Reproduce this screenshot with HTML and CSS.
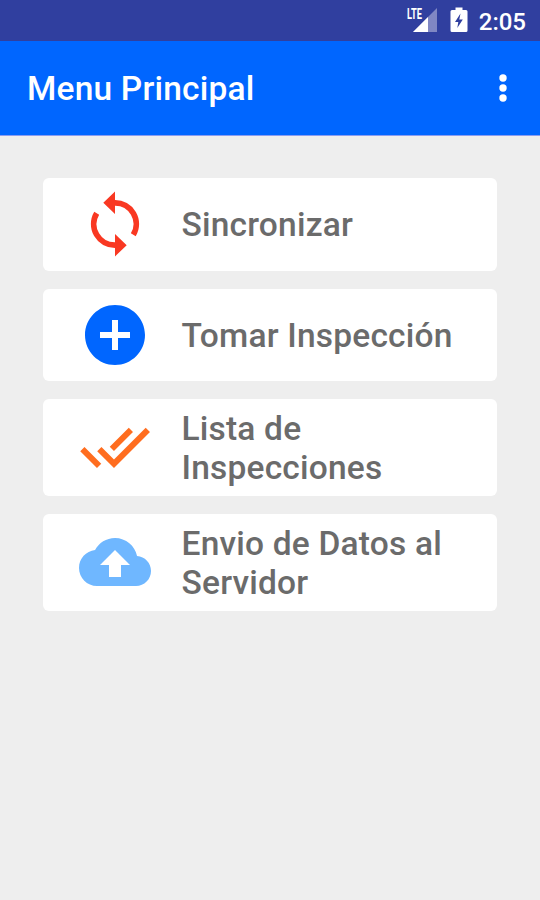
FILE: index.html
```
<!DOCTYPE html>
<html lang="es">
<head>
    <meta charset="utf-8">
    <title>Menu Principal</title>
    <link rel="stylesheet" href="styles.css">
</head>
<body>

    <div class="status-bar">
        <svg class="signal" width="32" height="28" viewBox="0 0 32 28">
            <path d="M31 2V26H7z" fill="#8087c3"/>
            <path d="M22 11V26H7z" fill="#fff"/>
            <path d="M0 1H17V13H0z" fill="#303f9f"/>
            <text class="lte" x="1" y="12.5" textLength="15" lengthAdjust="spacingAndGlyphs">LTE</text>
        </svg>
        <svg class="battery" width="18" height="26" viewBox="0 0 18 26">
            <path d="M5.5 0.5h7v2.5H16a1.5 1.5 0 0 1 1.5 1.5v19A1.5 1.5 0 0 1 16 25H2a1.5 1.5 0 0 1-1.5-1.5v-19A1.5 1.5 0 0 1 2 3h3.5z" fill="#fff"/>
            <path d="M10.5 6.5L5 15h3.3l-1 6L12.8 12.5H9.3z" fill="#303f9f"/>
        </svg>
        <span class="clock">2:05</span>
    </div>

    <header class="toolbar">
        <h1 class="title">Menu Principal</h1>
        <svg class="more" width="8" height="30" viewBox="0 0 8 30">
            <circle cx="4" cy="5" r="3.7"/>
            <circle cx="4" cy="15" r="3.7"/>
            <circle cx="4" cy="25" r="3.7"/>
        </svg>
    </header>

    <main class="menu">
        <div class="card">
            <svg class="icon sync" viewBox="0 0 24 24">
                <path class="arc" d="M11.9 4.95A7.05 7.05 0 0 1 18.1 15.6M12.1 19.05A7.05 7.05 0 0 1 5.9 8.4"/>
                <path d="M12 1.2V8.7L8.1 4.95zM12 15.3V22.8L15.9 19.05z"/>
            </svg>
            <span class="label">Sincronizar</span>
        </div>
        <div class="card">
            <svg class="icon add" viewBox="0 0 24 24">
                <path d="M12 2C6.48 2 2 6.48 2 12s4.48 10 10 10 10-4.48 10-10S17.52 2 12 2zm5 11h-4v4h-2v-4H7v-2h4V7h2v4h4v2z"/>
            </svg>
            <span class="label">Tomar Inspección</span>
        </div>
        <div class="card">
            <svg class="icon done" viewBox="0 0 24 24">
                <path d="M18 7l-1.41-1.41-6.34 6.34 1.41 1.41L18 7zm4.24-1.41L11.66 16.17 7.48 12l-1.41 1.41L11.66 19l12-12-1.42-1.41zM.41 13.41L6 19l1.41-1.41L1.83 12 .41 13.41z"/>
            </svg>
            <span class="label">Lista de Inspecciones</span>
        </div>
        <div class="card">
            <svg class="icon upload" viewBox="0 0 24 24">
                <path d="M19.35 10.04C18.67 6.59 15.64 4 12 4 9.11 4 6.6 5.64 5.35 8.04 2.34 8.36 0 10.91 0 14c0 3.31 2.69 6 6 6h13c2.76 0 5-2.24 5-5 0-2.64-2.05-4.78-4.65-4.96zM14 13v4h-4v-4H7l5-5 5 5h-3z"/>
            </svg>
            <span class="label">Envio de Datos al Servidor</span>
        </div>
    </main>

</body>
</html>
```

FILE: styles.css
```
body {
    margin: 0;
    height: 100vh;
    background: #eee;
    font-family: Roboto, sans-serif;
}

/*status bar*/
.status-bar {
    display: flex;
    align-items: center;
    justify-content: flex-end;
    box-sizing: border-box;
    height: 41px;
    padding: 0 14px 1px 0;
    background: #303f9f;
}

.lte {
    font-size: 14px;
    font-weight: 700;
    fill: #fff;
}

.battery {
    margin-left: 12px;
}

.clock {
    margin-left: 11px;
    padding-top: 3px;
    font-size: 24px;
    font-weight: 500;
    color: #fff;
}

/*toolbar*/
.toolbar {
    display: flex;
    align-items: center;
    justify-content: space-between;
    box-sizing: border-box;
    height: 95px;
    padding: 0 33px 0 27px;
    background: #06f;
    border-bottom: 1px solid #8a9cf0;
}

.title {
    margin: 0;
    padding-top: 1px;
    font-size: 33.5px;
    font-weight: 500;
    letter-spacing: 0.2px;
    color: #fff;
}

.more {
    fill: #fff;
}

/*menu*/
.menu {
    display: flex;
    flex-direction: column;
    gap: 18px;
    padding: 42.3px 43px 0;
}

.card {
    display: flex;
    align-items: center;
    box-sizing: border-box;
    min-height: 92.3px;
    padding: 9px 20px 9px 36px;
    background: #fff;
    border-radius: 6px;
}

.icon {
    flex: none;
    width: 72px;
    height: 72px;
}

.label {
    margin-left: 30.5px;
    padding-top: 1px;
    max-width: 275px;
    font-size: 33.5px;
    line-height: 39px;
    font-weight: 500;
    letter-spacing: 0.2px;
    color: #6b6b6b;
}

.sync {
    fill: #f93822;
}

.arc {
    fill: none;
    stroke: #f93822;
    stroke-width: 1.9;
}

.add {
    fill: #06f;
}

.done {
    fill: #ff6d1f;
}

.upload {
    fill: #6fb7ff;
}
```
